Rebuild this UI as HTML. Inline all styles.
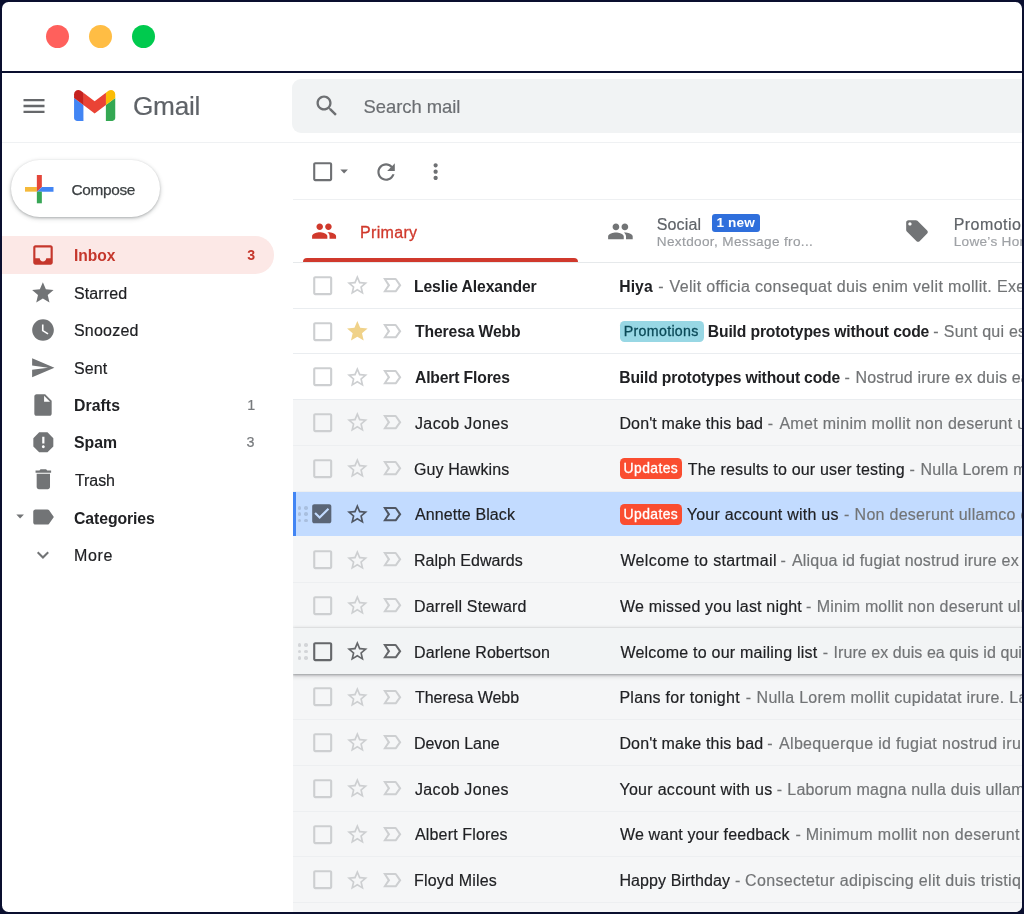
<!DOCTYPE html>
<html><head><meta charset="utf-8"><title>Gmail</title>
<style>
*{box-sizing:border-box;margin:0;padding:0}
html,body{width:1024px;height:914px;overflow:hidden;background:#0a0f2f;font-family:"Liberation Sans",sans-serif;}
.win{position:absolute;left:2px;top:2px;width:1020px;height:910px;background:#fff;border-radius:6.5px;overflow:hidden}
.pg{position:absolute;left:-2px;top:-2px;width:1024px;height:914px}
.dot{position:absolute;width:23px;height:23px;border-radius:50%;top:25.3px}
.hl{position:absolute;height:1px;background:#e9ecee}
.t{position:absolute;white-space:nowrap;line-height:1}
.b{position:absolute}
svg{position:absolute;overflow:visible}
.clip{position:absolute;left:0;top:0;width:1021.5px;height:914px;overflow:hidden;will-change:transform}
</style></head><body>
<div class="win"><div class="pg">

<div class="dot" style="left:46.3px;background:#ff605c"></div>
<div class="dot" style="left:89.1px;background:#ffbd44"></div>
<div class="dot" style="left:132.2px;background:#00ca4e"></div>
<div class="b" style="left:0;top:71.1px;width:1024px;height:1.8px;background:#0a0f2f"></div>
<div class="hl" style="left:0;top:142px;width:1024px;background:#eff1f3"></div>
<svg style="left:20.48px;top:92.03px" width="28.03" height="28.03" viewBox="0 0 24 24"><path fill="#66686b" d="M3 18h18v-2H3v2zm0-5h18v-2H3v2zm0-7v2h18V6H3z"/></svg>
<svg style="left:74.3px;top:90.4px" width="41.3" height="30.9" viewBox="52 42 88 66"><path d="M72 50v24M120 50v24" stroke="#e04a39" stroke-width="1.6" fill="none"/><path fill="#4285f4" d="M58 108h14V74L52 59v43c0 3.32 2.69 6 6 6"/><path fill="#34a853" d="M120 108h14c3.32 0 6-2.69 6-6V59l-20 15"/><path fill="#fbbc04" d="M120 48v26l20-15v-8c0-7.420-8.470-11.650-14.400-7.200"/><path fill="#ea4335" d="M72 74V48l24 18 24-18v26L96 92"/><path fill="#c5221f" d="M52 51v8l20 15V48l-5.600-4.200c-5.940-4.450-14.400-.22-14.400 7.200"/></svg>
<div class="b" style="left:292.3px;top:78.8px;width:760px;height:54.2px;border-radius:9px;background:#f1f3f4"></div>
<svg style="left:312.55px;top:92.18px" width="27.89" height="27.89" viewBox="0 0 24 24"><path fill="#6e7073" d="M15.5 14h-.79l-.28-.27C15.41 12.59 16 11.11 16 9.5 16 5.91 13.09 3 9.5 3S3 5.91 3 9.5 5.91 16 9.5 16c1.61 0 3.09-.59 4.23-1.57l.27.28v.79l5 4.99L20.49 19l-4.99-5zm-6 0C7.01 14 5 11.99 5 9.5S7.01 5 9.5 5 14 7.01 14 9.5 11.99 14 9.5 14z"/></svg>
<svg style="left:309.63px;top:159.33px" width="25.33" height="25.33" viewBox="0 0 24 24"><path fill="#6e7073" d="M19 5v14H5V5h14m0-2H5c-1.1 0-2 .9-2 2v14c0 1.1.9 2 2 2h14c1.1 0 2-.9 2-2V5c0-1.1-.9-2-2-2z"/></svg>
<svg style="left:334.98px;top:161.75px" width="18.24" height="18.24" viewBox="0 0 24 24"><path fill="#6e7073" d="M7 10l5 5 5-5z"/></svg>
<svg style="left:372.50px;top:158.66px" width="26.18" height="26.18" viewBox="0 0 24 24"><path fill="#6e7073" d="M17.65 6.35C16.2 4.9 14.21 4 12 4c-4.42 0-7.99 3.58-7.99 8s3.57 8 7.99 8c3.73 0 6.84-2.55 7.73-6h-2.08c-.82 2.33-3.04 4-5.65 4-3.31 0-6-2.69-6-6s2.69-6 6-6c1.66 0 3.14.69 4.22 1.78L13 11h7V4l-2.35 2.35z"/></svg>
<svg style="left:422.86px;top:159.41px" width="25.27" height="25.27" viewBox="0 0 24 24"><path fill="#6e7073" d="M12 8c1.1 0 2-.9 2-2s-.9-2-2-2-2 .9-2 2 .9 2 2 2zm0 2c-1.1 0-2 .9-2 2s.9 2 2 2 2-.9 2-2-.9-2-2-2zm0 6c-1.1 0-2 .9-2 2s.9 2 2 2 2-.9 2-2-.9-2-2-2z"/></svg>
<div class="hl" style="left:292.5px;top:198.5px;width:740px;background:#eef0f2"></div>
<div class="b" style="left:11px;top:160.3px;width:149.2px;height:57.2px;border-radius:29px;background:#fff;box-shadow:0 1px 2.5px rgba(60,64,67,.32),0 1.5px 4px 1px rgba(60,64,67,.14)"></div>
<svg style="left:0;top:0" width="80" height="230" viewBox="0 0 80 230"><rect x="25" y="187" width="11.9" height="4.65" fill="#f5b93a"/><polygon points="36.85,175 41.85,175 41.85,187 36.85,191.65" fill="#e4463a"/><polygon points="41.85,187 53.5,187 53.5,191.65 36.85,191.65" fill="#4285f4"/><rect x="36.85" y="191.65" width="5" height="11.65" fill="#38a656"/></svg>
<div class="b" style="left:0;top:236.2px;width:273.8px;height:37.4px;border-radius:0 18.7px 18.7px 0;background:#fce8e6"></div>
<svg style="left:29.80px;top:241.65px" width="26.00" height="26.00" viewBox="0 0 24 24"><path fill="#c5372c" d="M19 3H4.99c-1.11 0-1.98.89-1.98 2L3 19c0 1.1.88 2 1.99 2H19c1.1 0 2-.9 2-2V5c0-1.11-.9-2-2-2zm0 12h-4c0 1.66-1.35 3-3 3s-3-1.34-3-3H4.99V5H19v10z"/></svg>
<svg style="left:30.04px;top:279.78px" width="25.72" height="25.72" viewBox="0 0 24 24"><path fill="#727476" d="M12 17.27L18.18 21l-1.64-7.03L22 9.24l-7.19-.61L12 2 9.19 8.63 2 9.24l5.46 4.73L5.82 21z"/></svg>
<svg style="left:29.88px;top:317.13px" width="26.04" height="26.04" viewBox="0 0 24 24"><path fill="#727476" d="M12 2C6.5 2 2 6.5 2 12s4.5 10 10 10 10-4.5 10-10S17.5 2 12 2zm4.2 14.2L11 13V7h1.5v5.2l4.5 2.7-.8 1.3z"/></svg>
<svg style="left:29.84px;top:354.92px" width="25.47" height="25.47" viewBox="0 0 24 24"><path fill="#727476" d="M2.01 21L23 12 2.01 3 2 10l15 2-15 2z"/></svg>
<svg style="left:29.90px;top:391.80px" width="26.00" height="26.00" viewBox="0 0 24 24"><path fill="#727476" d="M6 2c-1.1 0-1.99.9-1.99 2L4 20c0 1.1.89 2 1.99 2H18c1.1 0 2-.9 2-2V8l-6-6H6zm7 7V3.5L18.5 9H13z"/></svg>
<svg style="left:29.67px;top:429.02px" width="26.67" height="26.67" viewBox="0 0 24 24"><path fill="#727476" d="M15.73 3H8.27L3 8.27v7.46L8.27 21h7.46L21 15.73V8.27L15.73 3zM12 17.3c-.72 0-1.3-.58-1.3-1.3 0-.72.58-1.3 1.3-1.3.72 0 1.3.58 1.3 1.3 0 .72-.58 1.3-1.3 1.3zm1-4.3h-2V7h2v6z"/></svg>
<svg style="left:29.56px;top:466.31px" width="26.68" height="26.68" viewBox="0 0 24 24"><path fill="#727476" d="M6 19c0 1.1.9 2 2 2h8c1.1 0 2-.9 2-2V7H6v12zM19 4h-3.5l-1-1h-5l-1 1H5v2h14V4z"/></svg>
<svg style="left:29.54px;top:504.48px" width="26.03" height="26.03" viewBox="0 0 24 24"><path fill="#727476" d="M17.63 5.84C17.27 5.33 16.67 5 16 5L5 5.01C3.9 5.01 3 5.9 3 7v10c0 1.1.9 1.99 2 1.99L16 19c.67 0 1.27-.33 1.63-.84L22 12l-4.37-6.16z"/></svg>
<svg style="left:11.38px;top:507.40px" width="18.24" height="18.24" viewBox="0 0 24 24"><path fill="#727476" d="M7 10l5 5 5-5z"/></svg>
<svg style="left:31.09px;top:543.10px" width="23.92" height="23.92" viewBox="0 0 24 24"><path fill="#727476" d="M16.59 8.59L12 13.17 7.41 8.59 6 10l6 6 6-6z"/></svg>
<svg style="left:311.22px;top:218.32px" width="26.17" height="26.17" viewBox="0 0 24 24"><path fill="#d0392c" d="M16 11c1.66 0 2.99-1.34 2.99-3S17.66 5 16 5c-1.66 0-3 1.34-3 3s1.34 3 3 3zm-8 0c1.66 0 2.99-1.34 2.99-3S9.66 5 8 5C6.34 5 5 6.34 5 8s1.34 3 3 3zm0 2c-2.33 0-7 1.17-7 3.5V19h14v-2.500c0-2.330-4.670-3.500-7-3.500zm8 0c-.29 0-.62.02-.97.05 1.160.840 1.970 1.970 1.970 3.450V19h6v-2.500c0-2.330-4.670-3.500-7-3.500z"/></svg>
<div class="b" style="left:303.4px;top:258px;width:275px;height:3.7px;border-radius:4px 4px 0 0;background:#d0392c"></div>
<svg style="left:607.43px;top:218.08px" width="26.84" height="26.84" viewBox="0 0 24 24"><path fill="#727476" d="M16 11c1.66 0 2.99-1.34 2.99-3S17.66 5 16 5c-1.66 0-3 1.34-3 3s1.34 3 3 3zm-8 0c1.66 0 2.99-1.34 2.99-3S9.66 5 8 5C6.34 5 5 6.34 5 8s1.34 3 3 3zm0 2c-2.33 0-7 1.17-7 3.5V19h14v-2.500c0-2.330-4.670-3.500-7-3.500zm8 0c-.29 0-.62.02-.97.05 1.160.840 1.970 1.970 1.970 3.450V19h6v-2.500c0-2.330-4.670-3.500-7-3.500z"/></svg>
<div class="b" style="left:712.3px;top:213.5px;width:47.6px;height:18px;border-radius:3px;background:#2f6fdc"></div>
<svg style="left:904.31px;top:218.46px" width="25.98" height="25.98" viewBox="0 0 24 24"><path fill="#727476" d="M21.41 11.58l-9-9C12.05 2.22 11.55 2 11 2H4c-1.1 0-2 .9-2 2v7c0 .55.22 1.05.59 1.42l9 9c.36.36.86.58 1.41.58.55 0 1.05-.22 1.41-.59l7-7c.37-.36.59-.86.59-1.410 0-.550-.230-1.060-.590-1.420zM5.500 7C4.670 7 4 6.330 4 5.500S4.670 4 5.500 4 7 4.670 7 5.500 6.330 7 5.500 7z"/></svg>
<div class="hl" style="left:292.5px;top:262px;width:740px;background:#e6e9eb"></div>
<div class="b" style="left:292.8px;top:262.6px;width:731.2px;height:660px;overflow:hidden"><div class="b" style="left:-292.8px;top:-262.6px;width:1024px;height:914px">
<div class="b" style="left:292.8px;top:262.60px;width:740px;height:45.73px;background:#fff;"></div>
<div class="hl" style="left:292.8px;top:307.73px;width:740px;background:#eaedf0;z-index:1"></div>
<svg style="z-index:3;left:309.55px;top:272.77px" width="25.40" height="25.40" viewBox="0 0 24 24"><path fill="#cdcfd1" d="M19 5v14H5V5h14m0-2H5c-1.1 0-2 .9-2 2v14c0 1.1.9 2 2 2h14c1.1 0 2-.9 2-2V5c0-1.1-.9-2-2-2z"/></svg>
<svg style="z-index:3;left:344.61px;top:273.14px" width="24.68" height="24.68" viewBox="0 0 24 24"><path fill="#cdcfd1" d="M22 9.24l-7.19-.62L12 2 9.19 8.63 2 9.24l5.46 4.73L5.82 21 12 17.27 18.18 21l-1.63-7.03L22 9.24zM12 15.4l-3.76 2.27 1-4.28-3.32-2.88 4.38-.38L12 6.1l1.71 4.04 4.38.38-3.32 2.88 1 4.28L12 15.4z"/></svg>
<svg style="z-index:3;left:379.89px;top:273.06px" width="24.42" height="24.42" viewBox="0 0 24 24"><path fill="#cdcfd1" d="M15 19H3l4.5-7L3 5h12c.65 0 1.26.31 1.63.84L21 12l-4.37 6.160c-.370.520-.980.840-1.630.840zm-8.500-2H15l3.500-5L15 7H6.500l3.500 5-3.500 5z"/></svg>
<div class="b" style="left:292.8px;top:308.33px;width:740px;height:45.73px;background:#fff;"></div>
<div class="hl" style="left:292.8px;top:353.46px;width:740px;background:#eaedf0;z-index:1"></div>
<svg style="z-index:3;left:309.55px;top:318.50px" width="25.40" height="25.40" viewBox="0 0 24 24"><path fill="#cdcfd1" d="M19 5v14H5V5h14m0-2H5c-1.1 0-2 .9-2 2v14c0 1.1.9 2 2 2h14c1.1 0 2-.9 2-2V5c0-1.1-.9-2-2-2z"/></svg>
<svg style="z-index:3;left:344.61px;top:318.87px" width="24.68" height="24.68" viewBox="0 0 24 24"><path fill="#f0d289" d="M12 17.27L18.18 21l-1.64-7.03L22 9.24l-7.19-.61L12 2 9.19 8.63 2 9.24l5.46 4.73L5.82 21z"/></svg>
<svg style="z-index:3;left:379.89px;top:318.79px" width="24.42" height="24.42" viewBox="0 0 24 24"><path fill="#cdcfd1" d="M15 19H3l4.5-7L3 5h12c.65 0 1.26.31 1.63.84L21 12l-4.37 6.160c-.370.520-.980.840-1.630.840zm-8.500-2H15l3.500-5L15 7H6.500l3.500 5-3.500 5z"/></svg>
<div class="b" style="left:619.8px;top:320.50px;width:84.2px;height:21.2px;border-radius:4.5px;background:#98d7e4;z-index:3"></div>
<div class="b" style="left:292.8px;top:354.06px;width:740px;height:45.73px;background:#fff;"></div>
<div class="hl" style="left:292.8px;top:399.19px;width:740px;background:#eaedf0;z-index:1"></div>
<svg style="z-index:3;left:309.55px;top:364.23px" width="25.40" height="25.40" viewBox="0 0 24 24"><path fill="#cdcfd1" d="M19 5v14H5V5h14m0-2H5c-1.1 0-2 .9-2 2v14c0 1.1.9 2 2 2h14c1.1 0 2-.9 2-2V5c0-1.1-.9-2-2-2z"/></svg>
<svg style="z-index:3;left:344.61px;top:364.60px" width="24.68" height="24.68" viewBox="0 0 24 24"><path fill="#cdcfd1" d="M22 9.24l-7.19-.62L12 2 9.19 8.63 2 9.24l5.46 4.73L5.82 21 12 17.27 18.18 21l-1.63-7.03L22 9.24zM12 15.4l-3.76 2.27 1-4.28-3.32-2.88 4.38-.38L12 6.1l1.71 4.04 4.38.38-3.32 2.88 1 4.28L12 15.4z"/></svg>
<svg style="z-index:3;left:379.89px;top:364.52px" width="24.42" height="24.42" viewBox="0 0 24 24"><path fill="#cdcfd1" d="M15 19H3l4.5-7L3 5h12c.65 0 1.26.31 1.63.84L21 12l-4.37 6.160c-.370.520-.980.840-1.630.840zm-8.500-2H15l3.500-5L15 7H6.500l3.500 5-3.500 5z"/></svg>
<div class="b" style="left:292.8px;top:399.79px;width:740px;height:45.73px;background:#f5f6f7;"></div>
<div class="hl" style="left:292.8px;top:444.92px;width:740px;background:#edeff1;z-index:1"></div>
<svg style="z-index:3;left:309.55px;top:409.96px" width="25.40" height="25.40" viewBox="0 0 24 24"><path fill="#cdcfd1" d="M19 5v14H5V5h14m0-2H5c-1.1 0-2 .9-2 2v14c0 1.1.9 2 2 2h14c1.1 0 2-.9 2-2V5c0-1.1-.9-2-2-2z"/></svg>
<svg style="z-index:3;left:344.61px;top:410.33px" width="24.68" height="24.68" viewBox="0 0 24 24"><path fill="#cdcfd1" d="M22 9.24l-7.19-.62L12 2 9.19 8.63 2 9.24l5.46 4.73L5.82 21 12 17.27 18.18 21l-1.63-7.03L22 9.24zM12 15.4l-3.76 2.27 1-4.28-3.32-2.88 4.38-.38L12 6.1l1.71 4.04 4.38.38-3.32 2.88 1 4.28L12 15.4z"/></svg>
<svg style="z-index:3;left:379.89px;top:410.25px" width="24.42" height="24.42" viewBox="0 0 24 24"><path fill="#cdcfd1" d="M15 19H3l4.5-7L3 5h12c.65 0 1.26.31 1.63.84L21 12l-4.37 6.160c-.370.520-.980.840-1.630.840zm-8.500-2H15l3.500-5L15 7H6.500l3.500 5-3.500 5z"/></svg>
<div class="b" style="left:292.8px;top:445.52px;width:740px;height:45.73px;background:#f5f6f7;"></div>
<div class="hl" style="left:292.8px;top:490.65px;width:740px;background:#edeff1;z-index:1"></div>
<svg style="z-index:3;left:309.55px;top:455.69px" width="25.40" height="25.40" viewBox="0 0 24 24"><path fill="#cdcfd1" d="M19 5v14H5V5h14m0-2H5c-1.1 0-2 .9-2 2v14c0 1.1.9 2 2 2h14c1.1 0 2-.9 2-2V5c0-1.1-.9-2-2-2z"/></svg>
<svg style="z-index:3;left:344.61px;top:456.06px" width="24.68" height="24.68" viewBox="0 0 24 24"><path fill="#cdcfd1" d="M22 9.24l-7.19-.62L12 2 9.19 8.63 2 9.24l5.46 4.73L5.82 21 12 17.27 18.18 21l-1.63-7.03L22 9.24zM12 15.4l-3.76 2.27 1-4.28-3.32-2.88 4.38-.38L12 6.1l1.71 4.04 4.38.38-3.32 2.88 1 4.28L12 15.4z"/></svg>
<svg style="z-index:3;left:379.89px;top:455.98px" width="24.42" height="24.42" viewBox="0 0 24 24"><path fill="#cdcfd1" d="M15 19H3l4.5-7L3 5h12c.65 0 1.26.31 1.63.84L21 12l-4.37 6.160c-.370.520-.980.840-1.630.840zm-8.500-2H15l3.500-5L15 7H6.500l3.500 5-3.500 5z"/></svg>
<div class="b" style="left:619.8px;top:457.78px;width:62.6px;height:21px;border-radius:4.5px;background:#fa4d30;z-index:3"></div>
<div class="b" style="left:292.8px;top:491.25px;width:740px;height:45.73px;background:#f5f6f7"></div>
<div class="b" style="left:292.8px;top:491.50px;width:740px;height:44.63px;background:#c2dbff;"></div>
<div class="b" style="left:292.8px;top:491.50px;width:3.2px;height:44.63px;background:#4285f4;z-index:3"></div>
<svg style="z-index:3;left:309.28px;top:501.35px" width="25.53" height="25.53" viewBox="0 0 24 24"><path fill="#5a6576" d="M19 3H5c-1.11 0-2 .9-2 2v14c0 1.1.89 2 2 2h14c1.11 0 2-.9 2-2V5c0-1.1-.89-2-2-2zm-9 14l-5-5 1.41-1.41L10 14.17l7.59-7.59L19 8l-9 9z"/></svg>
<svg style="z-index:3;left:344.61px;top:501.79px" width="24.68" height="24.68" viewBox="0 0 24 24"><path fill="#4f5662" d="M22 9.24l-7.19-.62L12 2 9.19 8.63 2 9.24l5.46 4.73L5.82 21 12 17.27 18.18 21l-1.63-7.03L22 9.24zM12 15.4l-3.76 2.27 1-4.28-3.32-2.88 4.38-.38L12 6.1l1.71 4.04 4.38.38-3.32 2.88 1 4.28L12 15.4z"/></svg>
<svg style="z-index:3;left:379.89px;top:501.71px" width="24.42" height="24.42" viewBox="0 0 24 24"><path fill="#4f5662" d="M15 19H3l4.5-7L3 5h12c.65 0 1.26.31 1.63.84L21 12l-4.37 6.160c-.370.520-.980.840-1.630.840zm-8.500-2H15l3.500-5L15 7H6.500l3.500 5-3.500 5z"/></svg>
<div class="b" style="left:297.9px;top:506.12px;width:3.6px;height:3.6px;border-radius:50%;background:#a9bfdf;z-index:3"></div>
<div class="b" style="left:297.9px;top:512.42px;width:3.6px;height:3.6px;border-radius:50%;background:#a9bfdf;z-index:3"></div>
<div class="b" style="left:297.9px;top:518.72px;width:3.6px;height:3.6px;border-radius:50%;background:#a9bfdf;z-index:3"></div>
<div class="b" style="left:304.2px;top:506.12px;width:3.6px;height:3.6px;border-radius:50%;background:#a9bfdf;z-index:3"></div>
<div class="b" style="left:304.2px;top:512.42px;width:3.6px;height:3.6px;border-radius:50%;background:#a9bfdf;z-index:3"></div>
<div class="b" style="left:304.2px;top:518.72px;width:3.6px;height:3.6px;border-radius:50%;background:#a9bfdf;z-index:3"></div>
<div class="b" style="left:619.8px;top:503.51px;width:62.6px;height:21px;border-radius:4.5px;background:#fa4d30;z-index:3"></div>
<div class="b" style="left:292.8px;top:536.98px;width:740px;height:45.73px;background:#f5f6f7;"></div>
<div class="hl" style="left:292.8px;top:582.11px;width:740px;background:#edeff1;z-index:1"></div>
<svg style="z-index:3;left:309.55px;top:547.14px" width="25.40" height="25.40" viewBox="0 0 24 24"><path fill="#cdcfd1" d="M19 5v14H5V5h14m0-2H5c-1.1 0-2 .9-2 2v14c0 1.1.9 2 2 2h14c1.1 0 2-.9 2-2V5c0-1.1-.9-2-2-2z"/></svg>
<svg style="z-index:3;left:344.61px;top:547.52px" width="24.68" height="24.68" viewBox="0 0 24 24"><path fill="#cdcfd1" d="M22 9.24l-7.19-.62L12 2 9.19 8.63 2 9.24l5.46 4.73L5.82 21 12 17.27 18.18 21l-1.63-7.03L22 9.24zM12 15.4l-3.76 2.27 1-4.28-3.32-2.88 4.38-.38L12 6.1l1.71 4.04 4.38.38-3.32 2.88 1 4.28L12 15.4z"/></svg>
<svg style="z-index:3;left:379.89px;top:547.44px" width="24.42" height="24.42" viewBox="0 0 24 24"><path fill="#cdcfd1" d="M15 19H3l4.5-7L3 5h12c.65 0 1.26.31 1.63.84L21 12l-4.37 6.160c-.370.520-.980.840-1.630.840zm-8.500-2H15l3.500-5L15 7H6.500l3.500 5-3.500 5z"/></svg>
<div class="b" style="left:292.8px;top:582.71px;width:740px;height:45.73px;background:#f5f6f7;"></div>
<svg style="z-index:3;left:309.55px;top:592.88px" width="25.40" height="25.40" viewBox="0 0 24 24"><path fill="#cdcfd1" d="M19 5v14H5V5h14m0-2H5c-1.1 0-2 .9-2 2v14c0 1.1.9 2 2 2h14c1.1 0 2-.9 2-2V5c0-1.1-.9-2-2-2z"/></svg>
<svg style="z-index:3;left:344.61px;top:593.25px" width="24.68" height="24.68" viewBox="0 0 24 24"><path fill="#cdcfd1" d="M22 9.24l-7.19-.62L12 2 9.19 8.63 2 9.24l5.46 4.73L5.82 21 12 17.27 18.18 21l-1.63-7.03L22 9.24zM12 15.4l-3.76 2.27 1-4.28-3.32-2.88 4.38-.38L12 6.1l1.71 4.04 4.38.38-3.32 2.88 1 4.28L12 15.4z"/></svg>
<svg style="z-index:3;left:379.89px;top:593.17px" width="24.42" height="24.42" viewBox="0 0 24 24"><path fill="#cdcfd1" d="M15 19H3l4.5-7L3 5h12c.65 0 1.26.31 1.63.84L21 12l-4.37 6.160c-.370.520-.980.840-1.630.840zm-8.500-2H15l3.500-5L15 7H6.500l3.500 5-3.500 5z"/></svg>
<div class="b" style="left:292.8px;top:628.44px;width:740px;height:45.73px;background:#f2f4f5;box-shadow:0 1px 2px rgba(60,64,67,.38),0 2px 4px 1px rgba(60,64,67,.16),0 -1.5px 3px rgba(60,64,67,.10);z-index:2;"></div>
<svg style="z-index:3;left:309.55px;top:638.61px" width="25.40" height="25.40" viewBox="0 0 24 24"><path fill="#65676a" d="M19 5v14H5V5h14m0-2H5c-1.1 0-2 .9-2 2v14c0 1.1.9 2 2 2h14c1.1 0 2-.9 2-2V5c0-1.1-.9-2-2-2z"/></svg>
<svg style="z-index:3;left:344.61px;top:638.98px" width="24.68" height="24.68" viewBox="0 0 24 24"><path fill="#65676a" d="M22 9.24l-7.19-.62L12 2 9.19 8.63 2 9.24l5.46 4.73L5.82 21 12 17.27 18.18 21l-1.63-7.03L22 9.24zM12 15.4l-3.76 2.27 1-4.28-3.32-2.88 4.38-.38L12 6.1l1.71 4.04 4.38.38-3.32 2.88 1 4.28L12 15.4z"/></svg>
<svg style="z-index:3;left:379.89px;top:638.90px" width="24.42" height="24.42" viewBox="0 0 24 24"><path fill="#65676a" d="M15 19H3l4.5-7L3 5h12c.65 0 1.26.31 1.63.84L21 12l-4.37 6.160c-.370.520-.980.840-1.630.840zm-8.500-2H15l3.500-5L15 7H6.500l3.500 5-3.500 5z"/></svg>
<div class="b" style="left:297.9px;top:643.31px;width:3.6px;height:3.6px;border-radius:50%;background:#d3d5d8;z-index:3"></div>
<div class="b" style="left:297.9px;top:649.61px;width:3.6px;height:3.6px;border-radius:50%;background:#d3d5d8;z-index:3"></div>
<div class="b" style="left:297.9px;top:655.91px;width:3.6px;height:3.6px;border-radius:50%;background:#d3d5d8;z-index:3"></div>
<div class="b" style="left:304.2px;top:643.31px;width:3.6px;height:3.6px;border-radius:50%;background:#d3d5d8;z-index:3"></div>
<div class="b" style="left:304.2px;top:649.61px;width:3.6px;height:3.6px;border-radius:50%;background:#d3d5d8;z-index:3"></div>
<div class="b" style="left:304.2px;top:655.91px;width:3.6px;height:3.6px;border-radius:50%;background:#d3d5d8;z-index:3"></div>
<div class="b" style="left:292.8px;top:674.17px;width:740px;height:45.73px;background:#f5f6f7;"></div>
<div class="hl" style="left:292.8px;top:719.30px;width:740px;background:#edeff1;z-index:1"></div>
<svg style="z-index:3;left:309.55px;top:684.34px" width="25.40" height="25.40" viewBox="0 0 24 24"><path fill="#cdcfd1" d="M19 5v14H5V5h14m0-2H5c-1.1 0-2 .9-2 2v14c0 1.1.9 2 2 2h14c1.1 0 2-.9 2-2V5c0-1.1-.9-2-2-2z"/></svg>
<svg style="z-index:3;left:344.61px;top:684.71px" width="24.68" height="24.68" viewBox="0 0 24 24"><path fill="#cdcfd1" d="M22 9.24l-7.19-.62L12 2 9.19 8.63 2 9.24l5.46 4.73L5.82 21 12 17.27 18.18 21l-1.63-7.03L22 9.24zM12 15.4l-3.76 2.27 1-4.28-3.32-2.88 4.38-.38L12 6.1l1.71 4.04 4.38.38-3.32 2.88 1 4.28L12 15.4z"/></svg>
<svg style="z-index:3;left:379.89px;top:684.63px" width="24.42" height="24.42" viewBox="0 0 24 24"><path fill="#cdcfd1" d="M15 19H3l4.5-7L3 5h12c.65 0 1.26.31 1.63.84L21 12l-4.37 6.160c-.370.520-.980.840-1.630.840zm-8.500-2H15l3.500-5L15 7H6.500l3.500 5-3.500 5z"/></svg>
<div class="b" style="left:292.8px;top:719.90px;width:740px;height:45.73px;background:#f5f6f7;"></div>
<div class="hl" style="left:292.8px;top:765.03px;width:740px;background:#edeff1;z-index:1"></div>
<svg style="z-index:3;left:309.55px;top:730.06px" width="25.40" height="25.40" viewBox="0 0 24 24"><path fill="#cdcfd1" d="M19 5v14H5V5h14m0-2H5c-1.1 0-2 .9-2 2v14c0 1.1.9 2 2 2h14c1.1 0 2-.9 2-2V5c0-1.1-.9-2-2-2z"/></svg>
<svg style="z-index:3;left:344.61px;top:730.44px" width="24.68" height="24.68" viewBox="0 0 24 24"><path fill="#cdcfd1" d="M22 9.24l-7.19-.62L12 2 9.19 8.63 2 9.24l5.46 4.73L5.82 21 12 17.27 18.18 21l-1.63-7.03L22 9.24zM12 15.4l-3.76 2.27 1-4.28-3.32-2.88 4.38-.38L12 6.1l1.71 4.04 4.38.38-3.32 2.88 1 4.28L12 15.4z"/></svg>
<svg style="z-index:3;left:379.89px;top:730.36px" width="24.42" height="24.42" viewBox="0 0 24 24"><path fill="#cdcfd1" d="M15 19H3l4.5-7L3 5h12c.65 0 1.26.31 1.63.84L21 12l-4.37 6.160c-.370.520-.980.840-1.630.840zm-8.500-2H15l3.500-5L15 7H6.500l3.500 5-3.500 5z"/></svg>
<div class="b" style="left:292.8px;top:765.63px;width:740px;height:45.73px;background:#f5f6f7;"></div>
<div class="hl" style="left:292.8px;top:810.76px;width:740px;background:#edeff1;z-index:1"></div>
<svg style="z-index:3;left:309.55px;top:775.79px" width="25.40" height="25.40" viewBox="0 0 24 24"><path fill="#cdcfd1" d="M19 5v14H5V5h14m0-2H5c-1.1 0-2 .9-2 2v14c0 1.1.9 2 2 2h14c1.1 0 2-.9 2-2V5c0-1.1-.9-2-2-2z"/></svg>
<svg style="z-index:3;left:344.61px;top:776.17px" width="24.68" height="24.68" viewBox="0 0 24 24"><path fill="#cdcfd1" d="M22 9.24l-7.19-.62L12 2 9.19 8.63 2 9.24l5.46 4.73L5.82 21 12 17.27 18.18 21l-1.63-7.03L22 9.24zM12 15.4l-3.76 2.27 1-4.28-3.32-2.88 4.38-.38L12 6.1l1.71 4.04 4.38.38-3.32 2.88 1 4.28L12 15.4z"/></svg>
<svg style="z-index:3;left:379.89px;top:776.09px" width="24.42" height="24.42" viewBox="0 0 24 24"><path fill="#cdcfd1" d="M15 19H3l4.5-7L3 5h12c.65 0 1.26.31 1.63.84L21 12l-4.37 6.160c-.370.520-.980.840-1.630.840zm-8.500-2H15l3.500-5L15 7H6.500l3.500 5-3.500 5z"/></svg>
<div class="b" style="left:292.8px;top:811.36px;width:740px;height:45.73px;background:#f5f6f7;"></div>
<div class="hl" style="left:292.8px;top:856.49px;width:740px;background:#edeff1;z-index:1"></div>
<svg style="z-index:3;left:309.55px;top:821.52px" width="25.40" height="25.40" viewBox="0 0 24 24"><path fill="#cdcfd1" d="M19 5v14H5V5h14m0-2H5c-1.1 0-2 .9-2 2v14c0 1.1.9 2 2 2h14c1.1 0 2-.9 2-2V5c0-1.1-.9-2-2-2z"/></svg>
<svg style="z-index:3;left:344.61px;top:821.90px" width="24.68" height="24.68" viewBox="0 0 24 24"><path fill="#cdcfd1" d="M22 9.24l-7.19-.62L12 2 9.19 8.63 2 9.24l5.46 4.73L5.82 21 12 17.27 18.18 21l-1.63-7.03L22 9.24zM12 15.4l-3.76 2.27 1-4.28-3.32-2.88 4.38-.38L12 6.1l1.71 4.04 4.38.38-3.32 2.88 1 4.28L12 15.4z"/></svg>
<svg style="z-index:3;left:379.89px;top:821.82px" width="24.42" height="24.42" viewBox="0 0 24 24"><path fill="#cdcfd1" d="M15 19H3l4.5-7L3 5h12c.65 0 1.26.31 1.63.84L21 12l-4.37 6.160c-.370.520-.980.840-1.630.840zm-8.500-2H15l3.500-5L15 7H6.500l3.500 5-3.500 5z"/></svg>
<div class="b" style="left:292.8px;top:857.09px;width:740px;height:45.73px;background:#f5f6f7;"></div>
<div class="hl" style="left:292.8px;top:902.22px;width:740px;background:#edeff1;z-index:1"></div>
<svg style="z-index:3;left:309.55px;top:867.25px" width="25.40" height="25.40" viewBox="0 0 24 24"><path fill="#cdcfd1" d="M19 5v14H5V5h14m0-2H5c-1.1 0-2 .9-2 2v14c0 1.1.9 2 2 2h14c1.1 0 2-.9 2-2V5c0-1.1-.9-2-2-2z"/></svg>
<svg style="z-index:3;left:344.61px;top:867.63px" width="24.68" height="24.68" viewBox="0 0 24 24"><path fill="#cdcfd1" d="M22 9.24l-7.19-.62L12 2 9.19 8.63 2 9.24l5.46 4.73L5.82 21 12 17.27 18.18 21l-1.63-7.03L22 9.24zM12 15.4l-3.76 2.27 1-4.28-3.32-2.88 4.38-.38L12 6.1l1.71 4.04 4.38.38-3.32 2.88 1 4.28L12 15.4z"/></svg>
<svg style="z-index:3;left:379.89px;top:867.55px" width="24.42" height="24.42" viewBox="0 0 24 24"><path fill="#cdcfd1" d="M15 19H3l4.5-7L3 5h12c.65 0 1.26.31 1.63.84L21 12l-4.37 6.160c-.370.520-.980.840-1.630.840zm-8.500-2H15l3.500-5L15 7H6.500l3.500 5-3.500 5z"/></svg>
<div class="b" style="left:292.8px;top:902.82px;width:740px;height:45.73px;background:#f5f6f7;"></div>
<div class="hl" style="left:292.8px;top:947.95px;width:740px;background:#edeff1;z-index:1"></div>
</div></div>
<div class="clip" style="z-index:5">
<div class="t" style="left:133.00px;top:93.00px;font-size:26.2px;font-weight:400;color:#5f6368;letter-spacing:-0.250px;-webkit-text-stroke:0.18px #5f6368;">Gmail</div>
<div class="t" style="left:363.60px;top:98.00px;font-size:18.4px;font-weight:400;color:#6b6e72;letter-spacing:-0.030px;-webkit-text-stroke:0.18px #6b6e72;">Search mail</div>
<div class="t" style="left:71.60px;top:182.00px;font-size:15.4px;font-weight:400;color:#3c4043;letter-spacing:-0.350px;-webkit-text-stroke:0.25px #3c4043;">Compose</div>
<div class="t" style="left:74.00px;top:248.00px;font-size:15.6px;font-weight:700;color:#c5372c;letter-spacing:-0.050px;">Inbox</div>
<div class="t" style="left:247.20px;top:248.00px;font-size:14.2px;font-weight:700;color:#c5372c;letter-spacing:0.000px;">3</div>
<div class="t" style="left:73.90px;top:286.00px;font-size:16.0px;font-weight:400;color:#202124;letter-spacing:0.133px;-webkit-text-stroke:0.18px #202124;">Starred</div>
<div class="t" style="left:73.90px;top:323.00px;font-size:16.0px;font-weight:400;color:#202124;letter-spacing:0.233px;-webkit-text-stroke:0.18px #202124;">Snoozed</div>
<div class="t" style="left:73.90px;top:361.00px;font-size:16.0px;font-weight:400;color:#202124;letter-spacing:0.100px;-webkit-text-stroke:0.18px #202124;">Sent</div>
<div class="t" style="left:74.00px;top:398.00px;font-size:15.8px;font-weight:700;color:#202124;letter-spacing:0.060px;">Drafts</div>
<div class="t" style="left:247.20px;top:398.00px;font-size:14.3px;font-weight:400;color:#777a7d;letter-spacing:0.000px;-webkit-text-stroke:0.18px #777a7d;">1</div>
<div class="t" style="left:74.00px;top:435.00px;font-size:15.8px;font-weight:700;color:#202124;letter-spacing:0.033px;">Spam</div>
<div class="t" style="left:246.60px;top:435.00px;font-size:14.3px;font-weight:400;color:#777a7d;letter-spacing:0.000px;-webkit-text-stroke:0.18px #777a7d;">3</div>
<div class="t" style="left:75.00px;top:473.00px;font-size:16.0px;font-weight:400;color:#202124;letter-spacing:-0.075px;-webkit-text-stroke:0.18px #202124;">Trash</div>
<div class="t" style="left:74.00px;top:511.00px;font-size:15.8px;font-weight:700;color:#202124;letter-spacing:-0.089px;">Categories</div>
<div class="t" style="left:74.00px;top:548.00px;font-size:16.0px;font-weight:400;color:#202124;letter-spacing:0.667px;-webkit-text-stroke:0.18px #202124;">More</div>
<div class="t" style="left:360.00px;top:225.00px;font-size:16.0px;font-weight:400;color:#d0392c;letter-spacing:0.333px;-webkit-text-stroke:0.3px #d0392c;">Primary</div>
<div class="t" style="left:656.80px;top:217.00px;font-size:16.0px;font-weight:400;color:#5f6368;letter-spacing:0.120px;-webkit-text-stroke:0.2px #5f6368;">Social</div>
<div class="t" style="left:716.40px;top:216.00px;font-size:13.6px;font-weight:700;color:#fff;letter-spacing:0.150px;">1 new</div>
<div class="t" style="left:656.80px;top:235.00px;font-size:13.6px;font-weight:400;color:#9a9da1;letter-spacing:0.348px;-webkit-text-stroke:0.18px #9a9da1;">Nextdoor, Message fro...</div>
<div class="t" style="left:953.70px;top:217.00px;font-size:16.0px;font-weight:400;color:#5f6368;letter-spacing:0.450px;-webkit-text-stroke:0.2px #5f6368;">Promotions</div>
<div class="t" style="left:953.70px;top:235.00px;font-size:13.6px;font-weight:400;color:#9fa2a6;letter-spacing:0.287px;-webkit-text-stroke:0.18px #9fa2a6;">Lowe’s Home</div>
<div class="t" style="left:414.00px;top:279.00px;font-size:15.7px;font-weight:700;color:#202124;letter-spacing:-0.093px;">Leslie Alexander</div>
<div class="t" style="left:619.30px;top:279.00px;font-size:15.7px;font-weight:700;color:#202124;letter-spacing:0.067px;">Hiya</div>
<div class="t" style="left:658.20px;top:279.00px;font-size:16.0px;font-weight:400;color:#727476;letter-spacing:0.000px;-webkit-text-stroke:0.18px #727476;">-</div>
<div class="t" style="left:669.60px;top:279.00px;font-size:16.0px;font-weight:400;color:#727476;letter-spacing:0.341px;-webkit-text-stroke:0.18px #727476;">Velit officia consequat duis enim velit mollit. Exercitation</div>
<div class="t" style="left:415.00px;top:324.00px;font-size:15.7px;font-weight:700;color:#202124;letter-spacing:-0.118px;">Theresa Webb</div>
<div class="t" style="left:707.80px;top:324.00px;font-size:15.7px;font-weight:700;color:#202124;letter-spacing:-0.150px;">Build prototypes without code</div>
<div class="t" style="left:933.20px;top:324.00px;font-size:16.0px;font-weight:400;color:#727476;letter-spacing:0.000px;-webkit-text-stroke:0.18px #727476;">-</div>
<div class="t" style="left:943.80px;top:324.00px;font-size:16.0px;font-weight:400;color:#727476;letter-spacing:0.214px;-webkit-text-stroke:0.18px #727476;">Sunt qui esse pariatur</div>
<div class="t" style="left:623.80px;top:324.00px;font-size:14.2px;font-weight:400;color:#0b4a58;letter-spacing:0.311px;-webkit-text-stroke:0.3px #0b4a58;">Promotions</div>
<div class="t" style="left:415.00px;top:370.00px;font-size:15.7px;font-weight:700;color:#202124;letter-spacing:-0.158px;">Albert Flores</div>
<div class="t" style="left:619.30px;top:370.00px;font-size:15.7px;font-weight:700;color:#202124;letter-spacing:-0.171px;">Build prototypes without code</div>
<div class="t" style="left:844.50px;top:370.00px;font-size:16.0px;font-weight:400;color:#727476;letter-spacing:0.000px;-webkit-text-stroke:0.18px #727476;">-</div>
<div class="t" style="left:855.50px;top:370.00px;font-size:16.0px;font-weight:400;color:#727476;letter-spacing:0.190px;-webkit-text-stroke:0.18px #727476;">Nostrud irure ex duis ea quis</div>
<div class="t" style="left:415.00px;top:416.00px;font-size:16.0px;font-weight:400;color:#202124;letter-spacing:0.370px;-webkit-text-stroke:0.18px #202124;">Jacob Jones</div>
<div class="t" style="left:619.40px;top:416.00px;font-size:16.0px;font-weight:400;color:#202124;letter-spacing:0.144px;-webkit-text-stroke:0.18px #202124;">Don't make this bad</div>
<div class="t" style="left:767.70px;top:416.00px;font-size:16.0px;font-weight:400;color:#727476;letter-spacing:0.000px;-webkit-text-stroke:0.18px #727476;">-</div>
<div class="t" style="left:779.40px;top:416.00px;font-size:16.0px;font-weight:400;color:#727476;letter-spacing:0.303px;-webkit-text-stroke:0.18px #727476;">Amet minim mollit non deserunt ullamco</div>
<div class="t" style="left:414.00px;top:462.00px;font-size:16.0px;font-weight:400;color:#202124;letter-spacing:0.090px;-webkit-text-stroke:0.18px #202124;">Guy Hawkins</div>
<div class="t" style="left:687.70px;top:462.00px;font-size:16.0px;font-weight:400;color:#202124;letter-spacing:0.173px;-webkit-text-stroke:0.18px #202124;">The results to our user testing</div>
<div class="t" style="left:909.60px;top:462.00px;font-size:16.0px;font-weight:400;color:#727476;letter-spacing:0.000px;-webkit-text-stroke:0.18px #727476;">-</div>
<div class="t" style="left:920.40px;top:462.00px;font-size:16.0px;font-weight:400;color:#727476;letter-spacing:0.180px;-webkit-text-stroke:0.18px #727476;">Nulla Lorem mollit cupidatat</div>
<div class="t" style="left:623.60px;top:462.00px;font-size:13.9px;font-weight:400;color:#fff;letter-spacing:0.400px;-webkit-text-stroke:0.3px #fff;">Updates</div>
<div class="t" style="left:415.00px;top:507.00px;font-size:16.0px;font-weight:400;color:#202124;letter-spacing:0.100px;-webkit-text-stroke:0.18px #202124;">Annette Black</div>
<div class="t" style="left:686.70px;top:507.00px;font-size:16.0px;font-weight:400;color:#202124;letter-spacing:0.247px;-webkit-text-stroke:0.18px #202124;">Your account with us</div>
<div class="t" style="left:843.90px;top:507.00px;font-size:16.0px;font-weight:400;color:#727476;letter-spacing:0.000px;-webkit-text-stroke:0.18px #727476;">-</div>
<div class="t" style="left:854.60px;top:507.00px;font-size:16.0px;font-weight:400;color:#727476;letter-spacing:0.274px;-webkit-text-stroke:0.18px #727476;">Non deserunt ullamco est sit</div>
<div class="t" style="left:623.60px;top:508.00px;font-size:13.9px;font-weight:400;color:#fff;letter-spacing:0.400px;-webkit-text-stroke:0.3px #fff;">Updates</div>
<div class="t" style="left:414.00px;top:553.00px;font-size:16.0px;font-weight:400;color:#202124;letter-spacing:0.017px;-webkit-text-stroke:0.18px #202124;">Ralph Edwards</div>
<div class="t" style="left:620.40px;top:553.00px;font-size:16.0px;font-weight:400;color:#202124;letter-spacing:0.374px;-webkit-text-stroke:0.18px #202124;">Welcome to startmail</div>
<div class="t" style="left:780.40px;top:553.00px;font-size:16.0px;font-weight:400;color:#727476;letter-spacing:0.000px;-webkit-text-stroke:0.18px #727476;">-</div>
<div class="t" style="left:792.00px;top:553.00px;font-size:16.0px;font-weight:400;color:#727476;letter-spacing:0.191px;-webkit-text-stroke:0.18px #727476;">Aliqua id fugiat nostrud irure ex duis</div>
<div class="t" style="left:414.00px;top:599.00px;font-size:16.0px;font-weight:400;color:#202124;letter-spacing:0.157px;-webkit-text-stroke:0.18px #202124;">Darrell Steward</div>
<div class="t" style="left:620.00px;top:599.00px;font-size:16.0px;font-weight:400;color:#202124;letter-spacing:0.183px;-webkit-text-stroke:0.18px #202124;">We missed you last night</div>
<div class="t" style="left:806.10px;top:599.00px;font-size:16.0px;font-weight:400;color:#727476;letter-spacing:0.000px;-webkit-text-stroke:0.18px #727476;">-</div>
<div class="t" style="left:816.80px;top:599.00px;font-size:16.0px;font-weight:400;color:#727476;letter-spacing:0.162px;-webkit-text-stroke:0.18px #727476;">Minim mollit non deserunt ullamco</div>
<div class="t" style="left:414.00px;top:645.00px;font-size:16.0px;font-weight:400;color:#202124;letter-spacing:0.094px;-webkit-text-stroke:0.18px #202124;">Darlene Robertson</div>
<div class="t" style="left:620.40px;top:645.00px;font-size:16.0px;font-weight:400;color:#202124;letter-spacing:0.227px;-webkit-text-stroke:0.18px #202124;">Welcome to our mailing list</div>
<div class="t" style="left:822.70px;top:645.00px;font-size:16.0px;font-weight:400;color:#727476;letter-spacing:0.000px;-webkit-text-stroke:0.18px #727476;">-</div>
<div class="t" style="left:833.60px;top:645.00px;font-size:16.0px;font-weight:400;color:#727476;letter-spacing:0.057px;-webkit-text-stroke:0.18px #727476;">Irure ex duis ea quis id quis ad</div>
<div class="t" style="left:415.00px;top:690.00px;font-size:16.0px;font-weight:400;color:#202124;letter-spacing:-0.055px;-webkit-text-stroke:0.18px #202124;">Theresa Webb</div>
<div class="t" style="left:619.40px;top:690.00px;font-size:16.0px;font-weight:400;color:#202124;letter-spacing:0.288px;-webkit-text-stroke:0.18px #202124;">Plans for tonight</div>
<div class="t" style="left:745.70px;top:690.00px;font-size:16.0px;font-weight:400;color:#727476;letter-spacing:0.000px;-webkit-text-stroke:0.18px #727476;">-</div>
<div class="t" style="left:756.60px;top:690.00px;font-size:16.0px;font-weight:400;color:#727476;letter-spacing:0.274px;-webkit-text-stroke:0.18px #727476;">Nulla Lorem mollit cupidatat irure. Laborum</div>
<div class="t" style="left:414.00px;top:736.00px;font-size:16.0px;font-weight:400;color:#202124;letter-spacing:-0.067px;-webkit-text-stroke:0.18px #202124;">Devon Lane</div>
<div class="t" style="left:619.40px;top:736.00px;font-size:16.0px;font-weight:400;color:#202124;letter-spacing:0.156px;-webkit-text-stroke:0.18px #202124;">Don't make this bad</div>
<div class="t" style="left:767.30px;top:736.00px;font-size:16.0px;font-weight:400;color:#727476;letter-spacing:0.000px;-webkit-text-stroke:0.18px #727476;">-</div>
<div class="t" style="left:779.00px;top:736.00px;font-size:16.0px;font-weight:400;color:#727476;letter-spacing:0.329px;-webkit-text-stroke:0.18px #727476;">Albequerque id fugiat nostrud irure ex duis</div>
<div class="t" style="left:415.00px;top:782.00px;font-size:16.0px;font-weight:400;color:#202124;letter-spacing:0.360px;-webkit-text-stroke:0.18px #202124;">Jacob Jones</div>
<div class="t" style="left:619.40px;top:782.00px;font-size:16.0px;font-weight:400;color:#202124;letter-spacing:0.300px;-webkit-text-stroke:0.18px #202124;">Your account with us</div>
<div class="t" style="left:776.70px;top:782.00px;font-size:16.0px;font-weight:400;color:#727476;letter-spacing:0.000px;-webkit-text-stroke:0.18px #727476;">-</div>
<div class="t" style="left:787.30px;top:782.00px;font-size:16.0px;font-weight:400;color:#727476;letter-spacing:0.209px;-webkit-text-stroke:0.18px #727476;">Laborum magna nulla duis ullamco</div>
<div class="t" style="left:415.00px;top:827.00px;font-size:16.0px;font-weight:400;color:#202124;letter-spacing:0.158px;-webkit-text-stroke:0.18px #202124;">Albert Flores</div>
<div class="t" style="left:620.00px;top:827.00px;font-size:16.0px;font-weight:400;color:#202124;letter-spacing:0.125px;-webkit-text-stroke:0.18px #202124;">We want your feedback</div>
<div class="t" style="left:795.40px;top:827.00px;font-size:16.0px;font-weight:400;color:#727476;letter-spacing:0.000px;-webkit-text-stroke:0.18px #727476;">-</div>
<div class="t" style="left:805.70px;top:827.00px;font-size:16.0px;font-weight:400;color:#727476;letter-spacing:0.354px;-webkit-text-stroke:0.18px #727476;">Minimum mollit non deserunt ullamco</div>
<div class="t" style="left:414.00px;top:873.00px;font-size:16.0px;font-weight:400;color:#202124;letter-spacing:0.190px;-webkit-text-stroke:0.18px #202124;">Floyd Miles</div>
<div class="t" style="left:619.40px;top:873.00px;font-size:16.0px;font-weight:400;color:#202124;letter-spacing:0.092px;-webkit-text-stroke:0.18px #202124;">Happy Birthday</div>
<div class="t" style="left:735.00px;top:873.00px;font-size:16.0px;font-weight:400;color:#727476;letter-spacing:0.000px;-webkit-text-stroke:0.18px #727476;">-</div>
<div class="t" style="left:745.10px;top:873.00px;font-size:16.0px;font-weight:400;color:#727476;letter-spacing:0.321px;-webkit-text-stroke:0.18px #727476;">Consectetur adipiscing elit duis tristique</div>
</div>
</div></div>
</body></html>
